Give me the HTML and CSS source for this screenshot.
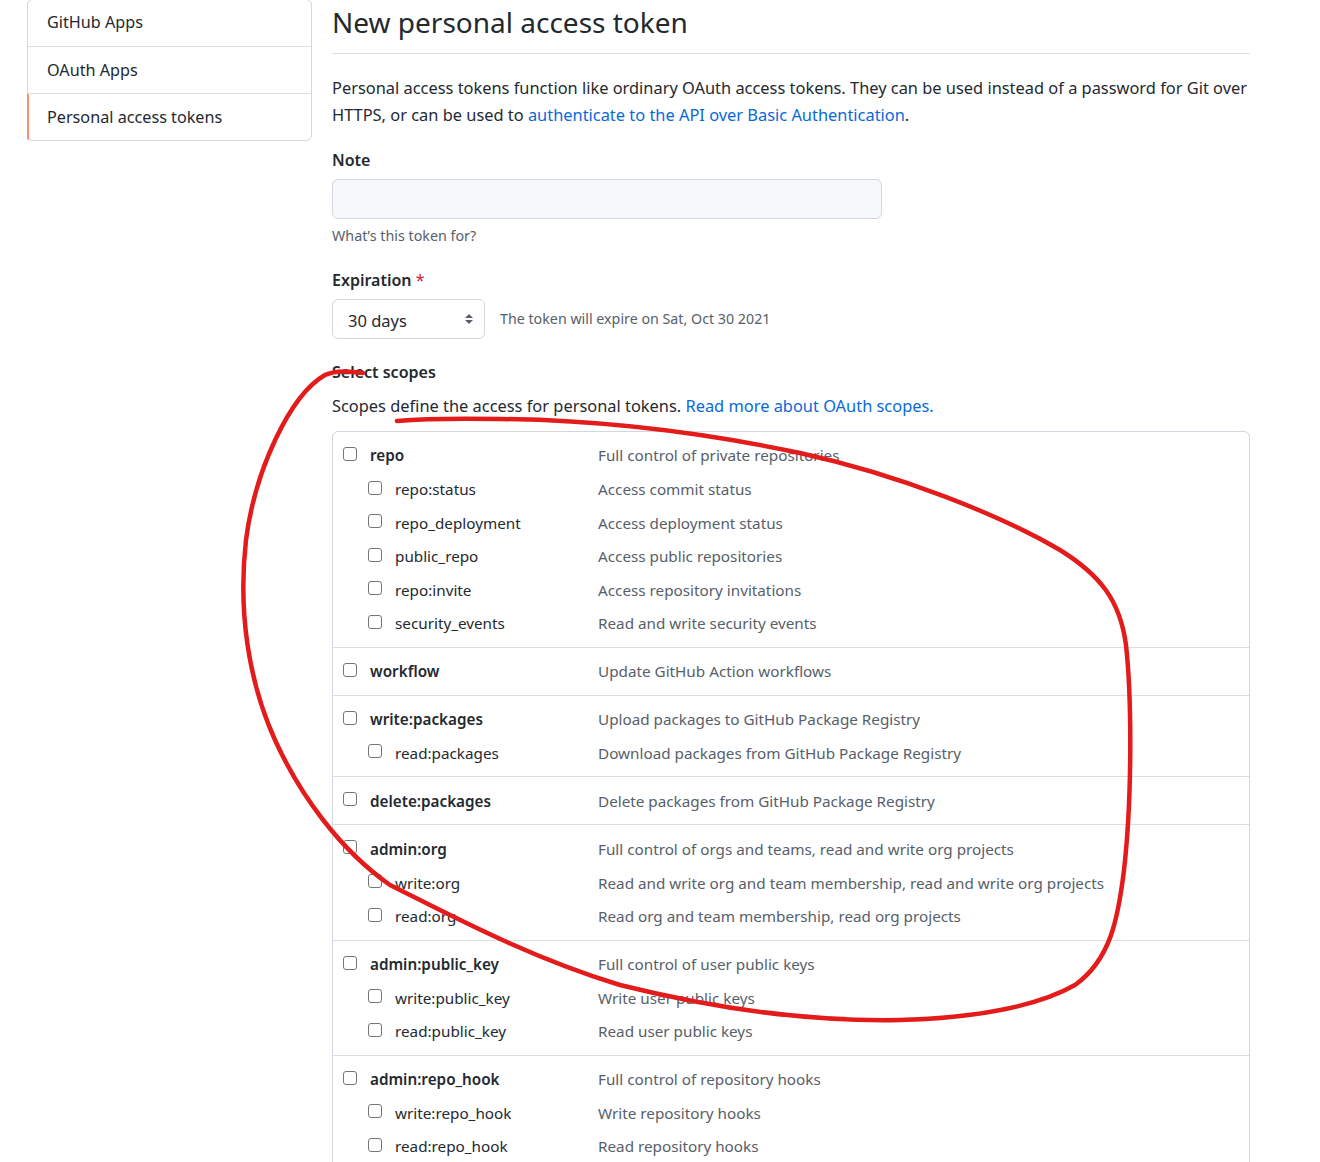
FILE: index.html
```html
<!DOCTYPE html>
<html>
<head>
<meta charset="utf-8">
<title>New personal access token</title>
<link rel="stylesheet" href="styles.css">
</head>
<body>
<div class="layout">
  <nav class="menu">
    <a class="menu-item">GitHub Apps</a>
    <a class="menu-item">OAuth Apps</a>
    <a class="menu-item selected">Personal access tokens</a>
  </nav>
  <main class="main">
    <div class="subhead"><h2 class="subhead-heading">New personal access token</h2></div>
    <p class="intro">Personal access tokens function like ordinary OAuth access tokens. They can be used instead of a password for Git over HTTPS, or can be used to <a class="link">authenticate to the API over Basic Authentication</a>.</p>

    <div class="label label-note">Note</div>
    <div class="input"></div>
    <div class="note">What’s this token for?</div>

    <div class="label label-exp">Expiration <span class="req">*</span></div>
    <div class="exp-row">
      <div class="select"><span class="select-text">30 days</span>
        <svg class="select-arrows" width="10" height="14" viewBox="0 0 10 14"><path d="M1 6 L5 2 L9 6 Z M1 8 L5 12 L9 8 Z" fill="#57606a"/></svg>
      </div>
      <span class="exp-note">The token will expire on Sat, Oct 30 2021</span>
    </div>

    <div class="label label-scopes">Select scopes</div>
    <p class="scopes-desc">Scopes define the access for personal tokens. <a class="link">Read more about OAuth scopes.</a></p>

    <div class="scopes">
      <div class="group">
        <div class="row"><div class="name parent"><span class="cb"></span>repo</div><div class="desc">Full control of private repositories</div></div>
        <div class="row"><div class="name child"><span class="cb"></span>repo:status</div><div class="desc">Access commit status</div></div>
        <div class="row"><div class="name child"><span class="cb"></span>repo_deployment</div><div class="desc">Access deployment status</div></div>
        <div class="row"><div class="name child"><span class="cb"></span>public_repo</div><div class="desc">Access public repositories</div></div>
        <div class="row"><div class="name child"><span class="cb"></span>repo:invite</div><div class="desc">Access repository invitations</div></div>
        <div class="row"><div class="name child"><span class="cb"></span>security_events</div><div class="desc">Read and write security events</div></div>
      </div>
      <div class="group">
        <div class="row"><div class="name parent"><span class="cb"></span>workflow</div><div class="desc">Update GitHub Action workflows</div></div>
      </div>
      <div class="group">
        <div class="row"><div class="name parent"><span class="cb"></span>write:packages</div><div class="desc">Upload packages to GitHub Package Registry</div></div>
        <div class="row"><div class="name child"><span class="cb"></span>read:packages</div><div class="desc">Download packages from GitHub Package Registry</div></div>
      </div>
      <div class="group">
        <div class="row"><div class="name parent"><span class="cb"></span>delete:packages</div><div class="desc">Delete packages from GitHub Package Registry</div></div>
      </div>
      <div class="group">
        <div class="row"><div class="name parent"><span class="cb"></span>admin:org</div><div class="desc">Full control of orgs and teams, read and write org projects</div></div>
        <div class="row"><div class="name child"><span class="cb"></span>write:org</div><div class="desc">Read and write org and team membership, read and write org projects</div></div>
        <div class="row"><div class="name child"><span class="cb"></span>read:org</div><div class="desc">Read org and team membership, read org projects</div></div>
      </div>
      <div class="group">
        <div class="row"><div class="name parent"><span class="cb"></span>admin:public_key</div><div class="desc">Full control of user public keys</div></div>
        <div class="row"><div class="name child"><span class="cb"></span>write:public_key</div><div class="desc">Write user public keys</div></div>
        <div class="row"><div class="name child"><span class="cb"></span>read:public_key</div><div class="desc">Read user public keys</div></div>
      </div>
      <div class="group">
        <div class="row"><div class="name parent"><span class="cb"></span>admin:repo_hook</div><div class="desc">Full control of repository hooks</div></div>
        <div class="row"><div class="name child"><span class="cb"></span>write:repo_hook</div><div class="desc">Write repository hooks</div></div>
        <div class="row"><div class="name child"><span class="cb"></span>read:repo_hook</div><div class="desc">Read repository hooks</div></div>
      </div>
      <div class="group">
        <div class="row"><div class="name parent"><span class="cb"></span>admin:org_hook</div><div class="desc">Full control of organization hooks</div></div>
      </div>
    </div>
  </main>
</div>
<svg class="annotation" width="1320" height="1162" viewBox="0 0 1320 1162">
  <path d="M363,373 C350,371 335,370 325,375 C290,395 255,470 246,540 C238,610 248,680 275,740 C300,795 340,850 390,885 C450,915 530,958 620,985 C700,1005 800,1022 900,1020 C980,1018 1040,1005 1075,985 C1110,960 1118,920 1124,870 C1132,800 1132,700 1126,645 C1120,600 1100,575 1060,550 C1000,515 900,475 800,453 C700,432 600,420 500,419 C450,418 420,419 397,421" fill="none" stroke="#e31b1b" stroke-width="4.5" stroke-linecap="round" stroke-linejoin="round"/>
</svg>
</body>
</html>
```

FILE: styles.css
```css
* { box-sizing: border-box; }
html, body { margin: 0; padding: 0; background: #ffffff; }
body {
  position: relative;
  font-family: "Noto Sans", "Open Sans", sans-serif;
  color: #24292f;
  font-size: 16px;
}
.layout {
  display: flex;
  align-items: flex-start;
  gap: 20px;
  padding-left: 27px;
  margin-top: -1px;
}
.menu {
  width: 285px;
  flex: none;
  display: flex;
  flex-direction: column;
  border: 1px solid #d0d7de;
  border-radius: 6px;
}
.menu-item {
  position: relative;
  display: block;
  height: 47px;
  line-height: 47px;
  padding-left: 19px;
  font-size: 16.2px;
  color: #24292f;
  border-bottom: 1px solid #d8dee4;
}
.menu-item:first-child { line-height: 45px; }
.menu-item:last-child { border-bottom: none; height: 46px; }
.menu-item.selected::before {
  content: "";
  position: absolute;
  left: -1px;
  top: 0;
  bottom: 0;
  width: 2px;
  background: #fd8c73;
  border-bottom-left-radius: 6px;
}
.main { width: 918px; flex: none; }
.subhead {
  border-bottom: 1px solid #d8dee4;
  height: 55px;
  padding-top: 3px;
}
.subhead-heading {
  margin: 0;
  font-size: 28px;
  line-height: 40px;
  font-weight: 400;
}
.intro {
  margin: 20px 0 0;
  font-size: 16.4px;
  line-height: 27px;
}
.link { color: #0969da; text-decoration: none; }
.label {
  font-size: 16px;
  font-weight: 600;
  line-height: 24px;
}
.label-note { margin-top: 20px; }
.label-exp { margin-top: 22px; }
.label-scopes { margin-top: 21px; }
.req { color: #cf222e; font-weight: 400; }
.input {
  margin-top: 7px;
  width: 550px;
  height: 40px;
  background: #f6f8fa;
  border: 1px solid #d0d7de;
  border-radius: 6px;
}
.note {
  margin-top: 7px;
  font-size: 14.3px;
  line-height: 20px;
  color: #57606a;
}
.exp-row {
  margin-top: 7px;
  display: flex;
  align-items: center;
  gap: 15px;
}
.select {
  width: 153px;
  height: 40px;
  border: 1px solid #d0d7de;
  border-radius: 6px;
  display: flex;
  align-items: center;
  justify-content: space-between;
  padding: 0 10px 0 15px;
  font-size: 16.5px;
}
.select-text { padding-top: 3px; }
.select-arrows { display: block; }
.exp-note {
  font-size: 14.25px;
  color: #57606a;
  margin-top: -2px;
}
.scopes-desc {
  margin: 10px 0 0;
  font-size: 16.4px;
  line-height: 24px;
}
.scopes {
  margin-top: 13px;
  border: 1px solid #d0d7de;
  border-radius: 6px;
}
.group {
  padding: 6.7px 0;
  border-bottom: 1px solid #d8dee4;
}
.group:last-child { border-bottom: none; }
.row {
  display: flex;
  align-items: center;
  height: 33.6px;
  padding-left: 10px;
  font-size: 15.25px;
}
.name {
  width: 255px;
  flex: none;
  display: flex;
  align-items: center;
  gap: 13px;
}
.name.parent { font-weight: 600; }
.name.child { padding-left: 25px; }
.desc { color: #57606a; }
.cb {
  width: 14px;
  height: 14px;
  flex: none;
  border: 1px solid #767676;
  border-radius: 3px;
  background: #ffffff;
  margin-bottom: 3px;
}
.annotation {
  position: absolute;
  left: 0;
  top: 0;
  pointer-events: none;
}
```
